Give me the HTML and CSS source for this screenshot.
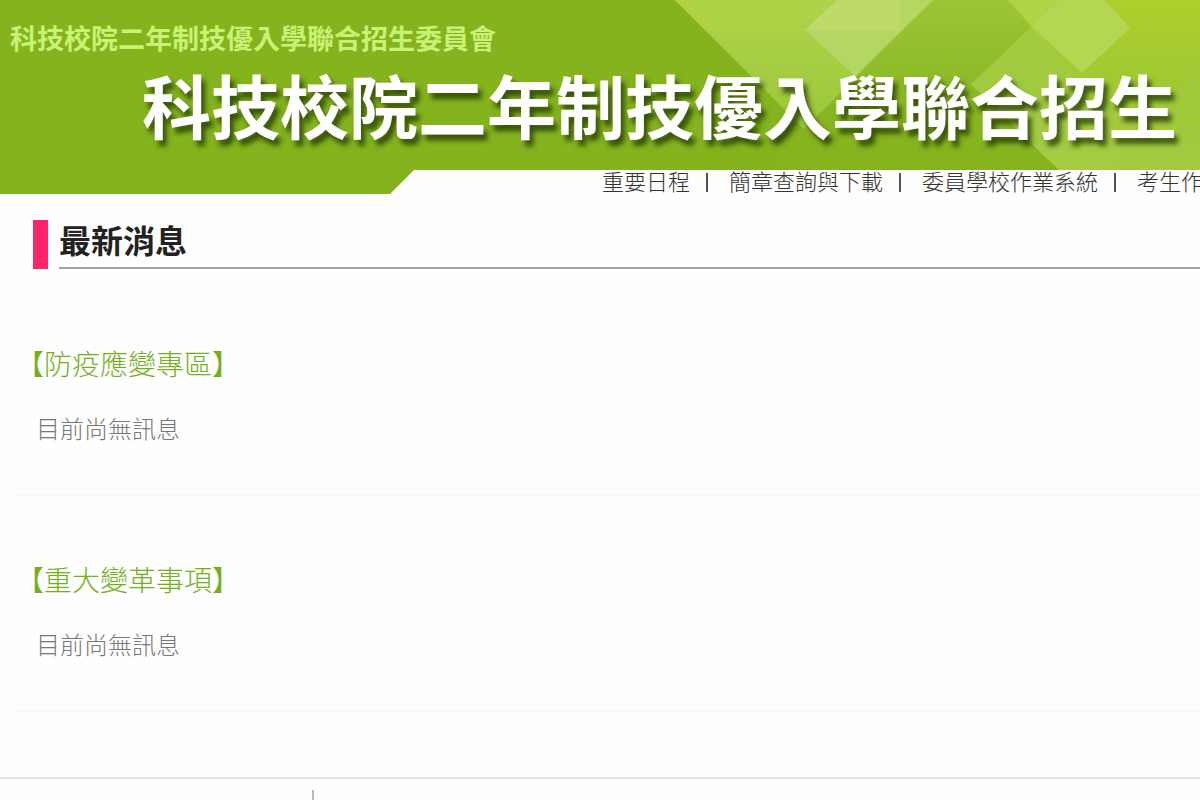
FILE: index.html
```html
<!DOCTYPE html>
<html lang="zh-Hant">
<head>
<meta charset="utf-8">
<title>科技校院二年制技優入學聯合招生委員會</title>
<link rel="stylesheet" href="styles.css">
</head>
<body>
<header class="banner">
  <svg class="banner-art" viewBox="0 0 1200 170" preserveAspectRatio="xMaxYMin slice" aria-hidden="true">
    <defs>
      <linearGradient id="lime" x1="0" y1="0" x2="0" y2="1"><stop offset="0" stop-color="#b0d24a"/><stop offset=".7" stop-color="#a2cb40"/><stop offset="1" stop-color="#9ac638"/></linearGradient>
      <linearGradient id="leaf" x1="0" y1="0" x2="0" y2="1"><stop offset="0" stop-color="#9cc636"/><stop offset=".7" stop-color="#86b51f"/><stop offset="1" stop-color="#84b31e"/></linearGradient>
      <linearGradient id="right" x1="0" y1="0" x2="0" y2="1"><stop offset="0" stop-color="#aecf2b"/><stop offset=".5" stop-color="#a0c834"/><stop offset="1" stop-color="#a6cc45"/></linearGradient>
    </defs>
    <path d="M933 0H1059L971 84L1059 170H762L804 129Z" fill="url(#leaf)"/>
    <path d="M1059 0H1200V170H1059L971 84Z" fill="url(#right)"/>
    <path d="M1031 28L1110 106L1048 160L971 84Z" fill="#a2ca46" opacity=".7"/>
    <path d="M1008 0H1059L1031 26Z" fill="#b0d446"/>
    <path d="M1200 60V170H1110Z" fill="#9fc93c" opacity=".4"/>
    <path d="M675 0H933L804 129Z" fill="url(#lime)"/>
    <path d="M675 0H802V30H705Z" fill="#b1d344" opacity=".6"/>
    <path d="M837 0H933L855 76L805 30Z" fill="#b6d663"/>
    <path d="M837 0H900V30H805Z" fill="#c0dc6e" opacity=".7"/>
    <path d="M1059 0H1105L1130 28L1082 73L1031 26Z" fill="#b4d653"/>
  </svg>
  <p class="committee">科技校院二年制技優入學聯合招生委員會</p>
  <h1 class="site-title">科技校院二年制技優入學聯合招生</h1>
</header>
<nav class="menu">
  <svg class="menu-tab" viewBox="0 0 414 24" aria-hidden="true"><path d="M0 0H414L390 24H0Z" fill="#84b31e"/></svg>
  <ul class="menu-list">
    <li><a href="#">重要日程</a></li>
    <li><a href="#">簡章查詢與下載</a></li>
    <li><a href="#">委員學校作業系統</a></li>
    <li><a href="#">考生作業系統</a></li>
  </ul>
</nav>
<main class="content">
  <div class="news-head"><h2>最新消息</h2></div>
  <section class="news">
    <h3>【防疫應變專區】</h3>
    <p>目前尚無訊息</p>
  </section>
  <section class="news">
    <h3>【重大變革事項】</h3>
    <p>目前尚無訊息</p>
  </section>
</main>
<footer class="footer"><div class="footer-side"></div></footer>
</body>
</html>
```
FILE: styles.css
```css
* { box-sizing: border-box; }
body {
  margin: 0;
  background: #fefefe;
  color: #777;
  font-family: "Noto Sans CJK TC", "Noto Sans", sans-serif;
  font-weight: 300;
  overflow-x: hidden;
}
h1, h2, h3, p, ul { margin: 0; padding: 0; }
.banner {
  position: relative;
  height: 170px;
  padding: 16px 10px 0;
  background: #84b31e;
  overflow: hidden;
  white-space: nowrap;
}
.banner-art { position: absolute; inset: 0; width: 100%; height: 100%; }
.committee {
  position: relative;
  color: #c9f176;
  font-size: 27px;
  font-weight: 700;
  line-height: 44px;
}
.site-title {
  position: relative;
  padding-left: 132px;
  color: #fff;
  font-size: 69px;
  font-weight: 700;
  line-height: 88px;
  text-shadow: 4px 6px 5px rgba(30, 50, 0, .75);
}
.menu { display: flex; height: 24px; }
.menu-tab { flex: none; width: 414px; height: 24px; }
.menu-list {
  display: flex;
  flex: 1;
  min-width: 0;
  padding-left: 188px;
  list-style: none;
  font-size: 22px;
  line-height: 20px;
  white-space: nowrap;
}
.menu-list a { color: #333; text-decoration: none; }
.menu-list li { flex: none; }
.menu-list li + li::before {
  content: "";
  display: inline-block;
  width: 2px;
  height: 19px;
  margin: 0 21px 0 16px;
  background: #555;
  vertical-align: -2px;
}
.content { padding-left: 16px; }
.news-head {
  display: flex;
  gap: 11px;
  margin: 26px 0 0 17px;
}
.news-head::before { content: ""; width: 15px; background: #ff2467; }
.news-head h2 {
  flex: 1;
  height: 49px;
  border-bottom: 2px solid #a3a3a3;
  color: #222;
  font-size: 32px;
  font-weight: 700;
  line-height: 38px;
}
.news { padding: 73px 0 48px; border-bottom: 2px solid #f7f7f7; }
.news h3 {
  color: #74b01c;
  font-size: 28px;
  font-weight: 300;
  line-height: 42px;
}
.news p { margin-top: 26px; padding-left: 20px; font-size: 24px; line-height: 36px; }
.news + .news { padding: 62px 0 48px; }
.footer { margin-top: 65px; padding-top: 11px; border-top: 2px solid #e6e6e6; }
.footer-side { width: 314px; height: 10px; border-right: 2px solid #bbb; }
```
